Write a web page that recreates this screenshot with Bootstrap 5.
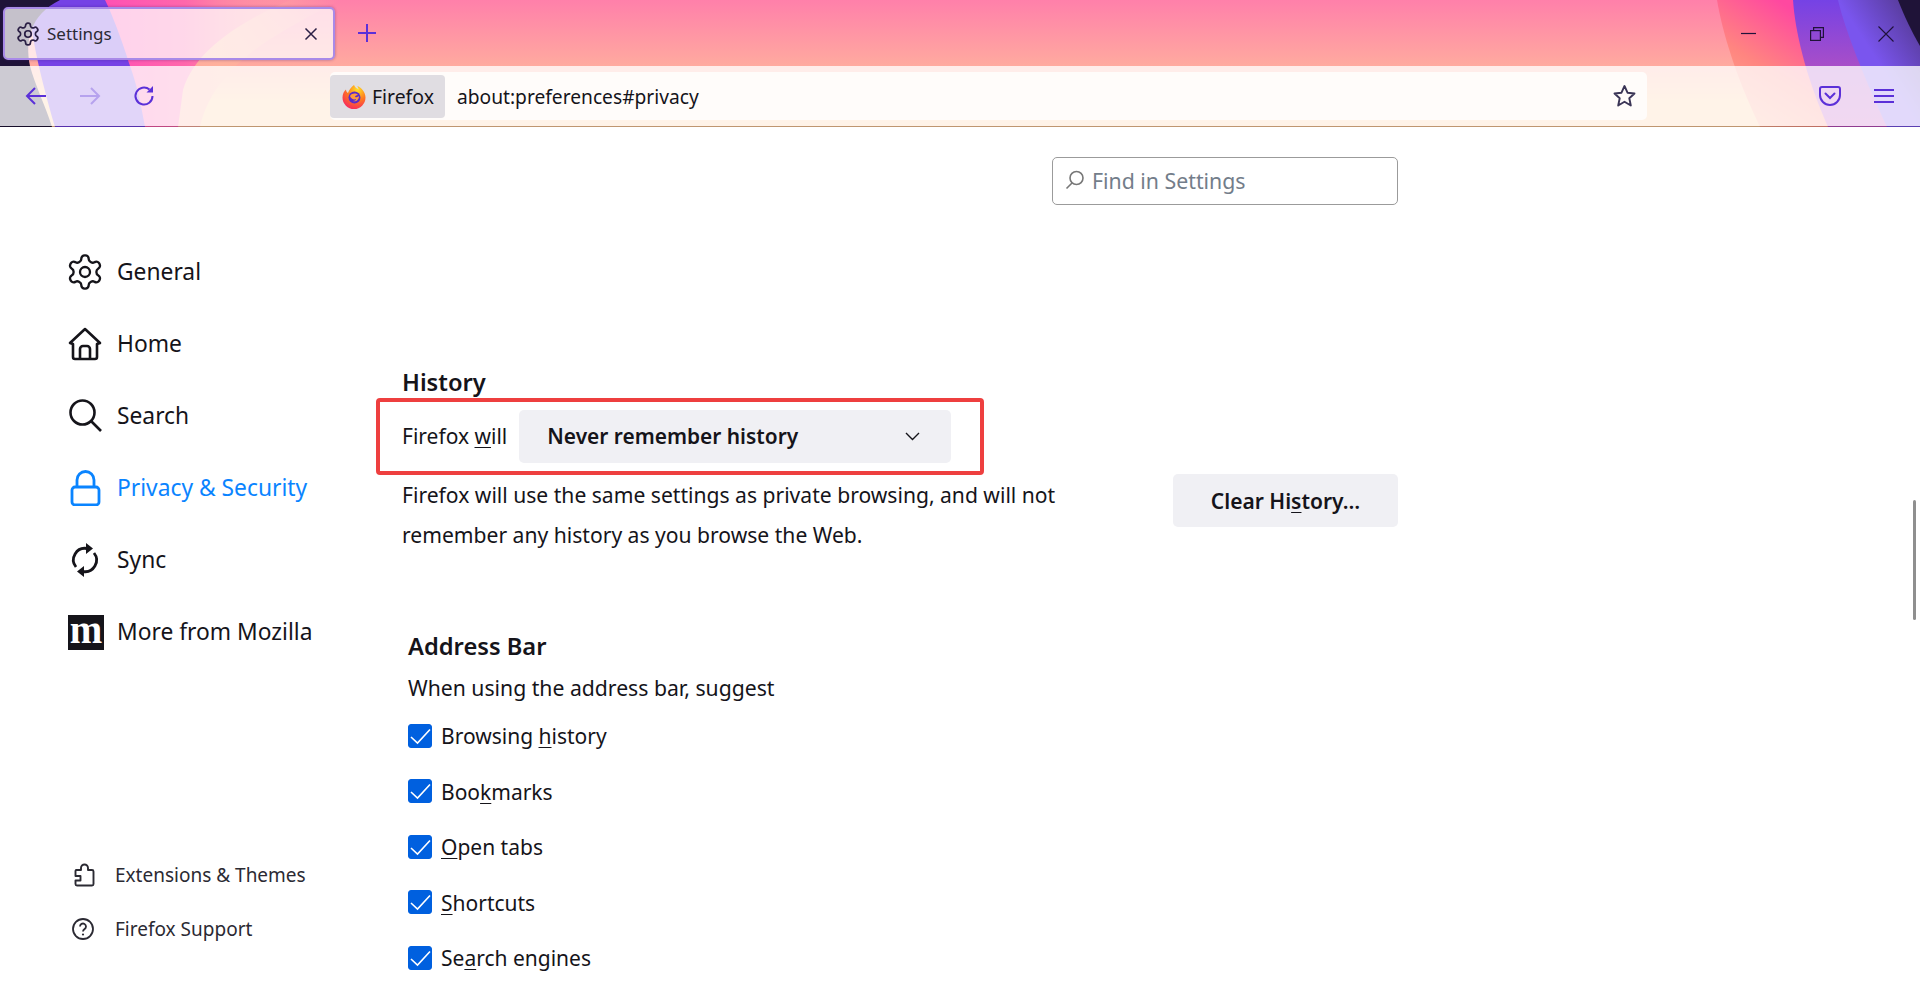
<!DOCTYPE html>
<html lang="en">
<head>
<meta charset="utf-8">
<title>Settings</title>
<link href="https://cdn.jsdelivr.net/npm/bootstrap@5.3.0/dist/css/bootstrap.min.css" rel="stylesheet">
<style>
html,body{height:100%;}
body{font-family:"Noto Sans","Open Sans",sans-serif;font-size:21px;color:#15141a;overflow:hidden;background:#fff;}
.ff-head{height:127px;flex:none;isolation:isolate;}
.ff-theme{position:absolute;left:0;top:0;width:100%;height:100%;z-index:-1;}
.ff-tabbar{height:66px;padding:7px 0 0 3px;}
.ff-tab{width:332px;height:53px;background:rgba(255,255,255,.74);border:2px solid #a98ae8;border-radius:5px;box-shadow:0 0 3px rgba(60,30,120,.45);padding:0 15px 0 10px;font-size:17px;color:#2b2a33;}
.ff-tabtitle{margin-left:6px;}
.ff-plus{margin-left:22px;}
.ff-winbtns{margin-left:auto;padding-right:26px;gap:54px;height:53px;}
.ff-toolbar{height:61px;background:rgba(255,255,255,.78);background-clip:padding-box;border-bottom:1px solid rgba(0,0,0,.25);padding:0 26px 0 25px;}
.ff-navicons{gap:32px;width:305px;}
.ff-urlbar{width:1317px;height:48px;background:#fffcfa;border-radius:5px;padding:3px 10px 3px 0;font-size:19.200px;}
.ff-identity{width:115px;height:43px;background:#e0dde2;border-radius:4px;padding-left:12px;gap:6px;}
.ff-identity span{padding-top:2px;font-size:19.4px;}
.ff-urltext{margin-left:12px;padding-top:2px;}
.ff-rightbtns{margin-left:auto;gap:33px;}
.ff-side{width:402px;flex:none;padding:109px 0 52px 68px;}
.ff-catrow{height:72px;gap:15px;color:#15141a;font-size:22.8px;}
.ff-catrow.is-on{color:#0a84ff;}
.ff-caticon{width:34px;flex:none;}
.ff-gearbig{margin:-3px;}
.ff-mlogo{width:36px;height:35px;background:#15141a;color:#fff;font:700 39px/29px "Liberation Serif",serif;text-align:center;}
.ff-footrow{height:54px;font-size:19px;color:#2b2a33;padding-left:3px;gap:18px;}
.ff-footrow svg{flex:none;width:26px;}
.ff-main{width:996px;flex:none;}
.ff-searchbox{width:346px;margin:30px 0 0 auto;}
.ff-searchbox .form-control{height:48px;border:1px solid #9b9b9b;border-radius:5px;padding:0 12px 2px 39px;font-size:21.3px;color:#15141a;}
.ff-searchbox .form-control::placeholder{color:#737d8a;opacity:1;}
.ff-searchicon{position:absolute;left:13px;top:13px;}
.ff-h{font-size:23.7px;font-weight:600;line-height:34px;height:34px;}
.ff-h1{margin-top:160px;margin-bottom:-1px;}
.ff-redbox{width:608px;height:77px;margin-left:-26px;border:4px solid #ee3f3f;border-radius:4px;padding-left:22px;gap:12px;}
.ff-select{width:432px;height:53px;flex:none;border:0;border-radius:5px;background-color:#f0f0f4;padding:0 0 0 28px;font-size:20.9px;font-weight:600;color:#15141a;background-image:none;cursor:default;}
.ff-chev{position:absolute;right:31px;top:50%;margin-top:-5px;pointer-events:none;}
.ff-desc{line-height:40px;width:690px;font-size:21.1px;}
.ff-clear{width:225px;height:53px;margin-top:-1px;background:#f0f0f4;border:0;border-radius:5px;font-size:21px;font-weight:600;color:#15141a;padding:2px 0 0;}
.ff-sub{margin-left:6px;}
.ff-h2{margin-top:74px;}
.ff-when{line-height:40px;margin-top:5px;font-size:21.2px;}
.ff-chk{height:55.5px;margin:0;padding:0;gap:9px;}
.ff-chk .form-check-input{width:24px;height:24px;margin:0;float:none;flex:none;border-radius:3px;background-color:#0060df;border-color:#0060df;background-size:24px;}
.ff-chk .form-check-input:checked{background-image:url("data:image/svg+xml,%3Csvg xmlns='http://www.w3.org/2000/svg' viewBox='0 0 24 24'%3E%3Cpath d='M3 13l6.500 6L22 5.500' fill='none' stroke='%23fff' stroke-width='1.600'/%3E%3C/svg%3E");}
.ff-chk label{margin:2px 0 0;}
.ff-scroll{position:absolute;right:4px;top:500px;width:3px;height:120px;background:#8f8f8f;}
u{text-underline-offset:3px;text-decoration-thickness:1px;}
</style>
</head>
<body class="d-flex flex-column">
<header class="ff-head position-relative">
  <svg class="ff-theme" viewBox="0 0 1920 127" preserveAspectRatio="none" aria-hidden="true">
    <defs>
      <linearGradient id="bg" x1="0" y1="0" x2="0" y2="1"><stop offset="0" stop-color="#ff80aa"/><stop offset=".52" stop-color="#ffaa9f"/><stop offset=".8" stop-color="#ffc896"/><stop offset="1" stop-color="#ffc896"/></linearGradient>
      <linearGradient id="hotR" x1="1" y1="0" x2="0" y2="1"><stop offset=".35" stop-color="#ff48a0"/><stop offset=".65" stop-color="#ff8580"/><stop offset="1" stop-color="#ffb890"/></linearGradient>
      <linearGradient id="pur" x1="0" y1="0" x2="0" y2="1"><stop offset="0" stop-color="#7542e5"/><stop offset=".52" stop-color="#a84ec8"/><stop offset="1" stop-color="#c050c0"/></linearGradient>
      <linearGradient id="pur2" x1="1" y1="0" x2="0" y2="1"><stop offset="0" stop-color="#4f3585"/><stop offset=".5" stop-color="#7a55ee"/><stop offset="1" stop-color="#7a55ee"/></linearGradient>
      <linearGradient id="pk" x1="0" y1="0" x2="1" y2="0"><stop offset="0" stop-color="#ff40b8" stop-opacity=".85"/><stop offset=".45" stop-color="#ff50b0" stop-opacity=".75"/><stop offset="1" stop-color="#ff70a8" stop-opacity=".1"/></linearGradient>
      <linearGradient id="pc" x1="0" y1="0" x2="1" y2="0"><stop offset="0" stop-color="#ffa4a0"/><stop offset=".5" stop-color="#ffb09c"/><stop offset="1" stop-color="#ffb09c" stop-opacity="0"/></linearGradient>
    </defs>
    <rect width="1920" height="127" fill="url(#bg)"/>
    <path d="M100 0H340C285 30 215 60 200 127H140Z" fill="url(#pc)"/>
    <path d="M100 0H290C240 22 195 50 183 90L178 127H140C135 85 125 40 100 0Z" fill="url(#pk)"/>
    <path d="M28 0H105C112 14 122 40 130 66C137 85 141 105 145 127H55C40 75 32 40 28 0Z" fill="#7542e5"/>
    <path d="M0 0H60C30 15 25 40 30 66C35 85 45 105 52 127H0Z" fill="#1f1338"/>
    <path d="M1717 0C1722 30 1735 75 1760 127H1920V0Z" fill="url(#hotR)"/>
    <path d="M1793 0C1795 30 1805 75 1828 127H1920V0Z" fill="url(#pur)"/>
    <path d="M1838 0C1845 30 1865 80 1887 127H1920V0Z" fill="url(#pur2)"/>
    <path d="M1898 0C1905 18 1912 32 1920 46V0Z" fill="#1f1338"/>
  </svg>
  <div class="ff-tabbar d-flex align-items-start">
    <div class="ff-tab d-flex align-items-center">
      <svg width="26" height="26" viewBox="0 0 24 24" fill="none" stroke="#2b1f45" stroke-width="1.600"><path d="M12.220 2h-.44a2 2 0 0 0-2 2v.18a2 2 0 0 1-1 1.730l-.43.25a2 2 0 0 1-2 0l-.15-.08a2 2 0 0 0-2.730.73l-.22.38a2 2 0 0 0 .73 2.730l.15.1a2 2 0 0 1 1 1.720v.51a2 2 0 0 1-1 1.740l-.15.09a2 2 0 0 0-.73 2.730l.22.38a2 2 0 0 0 2.730.73l.15-.08a2 2 0 0 1 2 0l.43.25a2 2 0 0 1 1 1.730V20a2 2 0 0 0 2 2h.44a2 2 0 0 0 2-2v-.18a2 2 0 0 1 1-1.730l.43-.25a2 2 0 0 1 2 0l.15.08a2 2 0 0 0 2.730-.73l.22-.39a2 2 0 0 0-.73-2.730l-.15-.08a2 2 0 0 1-1-1.740v-.5a2 2 0 0 1 1-1.740l.15-.09a2 2 0 0 0 .73-2.730l-.22-.38a2 2 0 0 0-2.730-.73l-.15.08a2 2 0 0 1-2 0l-.43-.25a2 2 0 0 1-1-1.730V4a2 2 0 0 0-2-2z"/><circle cx="12" cy="12" r="3"/></svg>
      <span class="ff-tabtitle">Settings</span>
      <svg class="ms-auto" width="14" height="14" viewBox="0 0 14 14" fill="none" stroke="#2b1f45" stroke-width="1.500"><path d="M1.500 1.500l11 11M12.500 1.500l-11 11"/></svg>
    </div>
    <svg class="ff-plus mt-3" width="20" height="20" viewBox="0 0 20 20" fill="none" stroke="#5b30d8" stroke-width="2"><path d="M10 1v18M1 10h18"/></svg>
    <div class="ff-winbtns d-flex align-items-center">
      <svg width="15" height="15" viewBox="0 0 15 15" fill="none" stroke="#20123a" stroke-width="1.200"><path d="M0 7.500h15"/></svg>
      <svg width="14" height="14" viewBox="0 0 14 14" fill="none" stroke="#20123a" stroke-width="1.200"><rect x=".6" y="3.600" width="9.800" height="9.800"/><path d="M3.600 3.600V.6h9.800v9.800h-3"/></svg>
      <svg width="16" height="16" viewBox="0 0 16 16" fill="none" stroke="#20123a" stroke-width="1.100"><path d="M.5.5l15 15M15.500.5l-15 15"/></svg>
    </div>
  </div>
  <div class="ff-toolbar d-flex align-items-center">
    <div class="ff-navicons d-flex align-items-center">
      <svg width="22" height="20" viewBox="0 0 22 20" fill="none" stroke="#5b30d8" stroke-width="2"><path d="M21 10H2M10 2l-8 8 8 8"/></svg>
      <svg width="22" height="20" viewBox="0 0 22 20" fill="none" stroke="#b6a2ee" stroke-width="2"><path d="M1 10h19M12 2l8 8-8 8"/></svg>
      <svg width="22" height="22" viewBox="0 0 22 22" fill="none" stroke="#5b30d8" stroke-width="2"><path d="M19.500 11a8.500 8.500 0 1 1-3-6.500"/><path d="M20 1v6.500h-6.500" fill="#5b30d8" stroke="none"/></svg>
    </div>
    <div class="ff-urlbar d-flex align-items-center">
      <div class="ff-identity d-flex align-items-center">
        <svg width="24" height="25" viewBox="0 0 24 25" aria-hidden="true">
          <defs><radialGradient id="fx" cx=".65" cy=".2" r=".95"><stop offset="0" stop-color="#ffe226"/><stop offset=".45" stop-color="#ff7a1f"/><stop offset="1" stop-color="#f5156c"/></radialGradient></defs>
          <path d="M12 1c1 3 3 3.500 5 4.500C16 4 15.500 3 15.500 2c4 2 8 6 8 11.500A11.500 11.500 0 0 1 .5 13.500C.5 10 2 7 4 5.500c0 2 1 3 2 3.500C7 6 9 3 12 1Z" fill="url(#fx)"/>
          <circle cx="12.500" cy="13.500" r="6" fill="#5b2bc8"/>
          <path d="M8 12c2-3 6-3 8-1-2 0-3 1-3 2 2 .5 3 0 4-1 0 4-3 6-6 5 2 0 3-1 3-2-2 1-5 0-6-3Z" fill="#ff9a3c"/>
        </svg>
        <span>Firefox</span>
      </div>
      <span class="ff-urltext">about:preferences#privacy</span>
      <svg class="ms-auto" width="25" height="24" viewBox="0 0 25 24" fill="none" stroke="#3b3556" stroke-width="1.900" stroke-linejoin="round"><path d="M12.500 2l3 6.700 7 .8-5.200 4.800 1.500 7.200-6.300-3.700-6.300 3.700 1.500-7.200L2.500 9.500l7-.8z"/></svg>
    </div>
    <div class="ff-rightbtns d-flex align-items-center">
      <svg width="22" height="20" viewBox="0 0 22 20" fill="none" stroke="#5b30d8" stroke-width="2"><path d="M3 1h16a2 2 0 0 1 2 2v6a10 10 0 0 1-20 0V3a2 2 0 0 1 2-2z"/><path d="M6.500 7.500l4.500 4.500 4.500-4.500" stroke-linecap="round"/></svg>
      <svg width="20" height="16" viewBox="0 0 20 16" fill="none" stroke="#5b30d8" stroke-width="2"><path d="M0 2h20M0 8h20M0 14h20"/></svg>
    </div>
  </div>
</header>

<div class="d-flex flex-grow-1 position-relative">
  <nav class="ff-side d-flex flex-column">
    <div class="ff-catrow d-flex align-items-center">
      <span class="ff-caticon"><svg class="d-block ff-gearbig" width="40" height="40" viewBox="0 0 24 24" fill="none" stroke="#15141a" stroke-width="1.400"><path d="M12.220 2h-.44a2 2 0 0 0-2 2v.18a2 2 0 0 1-1 1.730l-.43.25a2 2 0 0 1-2 0l-.15-.08a2 2 0 0 0-2.730.73l-.22.38a2 2 0 0 0 .73 2.730l.15.1a2 2 0 0 1 1 1.720v.51a2 2 0 0 1-1 1.740l-.15.09a2 2 0 0 0-.73 2.730l.22.38a2 2 0 0 0 2.730.73l.15-.08a2 2 0 0 1 2 0l.43.25a2 2 0 0 1 1 1.730V20a2 2 0 0 0 2 2h.44a2 2 0 0 0 2-2v-.18a2 2 0 0 1 1-1.730l.43-.25a2 2 0 0 1 2 0l.15.08a2 2 0 0 0 2.730-.73l.22-.39a2 2 0 0 0-.73-2.730l-.15-.08a2 2 0 0 1-1-1.740v-.5a2 2 0 0 1 1-1.740l.15-.09a2 2 0 0 0 .73-2.730l-.22-.38a2 2 0 0 0-2.730-.73l-.15.08a2 2 0 0 1-2 0l-.43-.25a2 2 0 0 1-1-1.730V4a2 2 0 0 0-2-2z"/><circle cx="12" cy="12" r="3"/></svg></span>
      <span>General</span>
    </div>
    <div class="ff-catrow d-flex align-items-center">
      <span class="ff-caticon"><svg class="d-block" width="34" height="34" viewBox="0 0 34 34" fill="none" stroke="#15141a" stroke-width="2.600" stroke-linejoin="round"><path d="M2 16L17 2l15 14-3 1v13a2 2 0 0 1-2 2H7a2 2 0 0 1-2-2V17z"/><path d="M12 32V22a3 3 0 0 1 3-3h4a3 3 0 0 1 3 3v10"/></svg></span>
      <span>Home</span>
    </div>
    <div class="ff-catrow d-flex align-items-center">
      <span class="ff-caticon"><svg class="d-block" width="34" height="34" viewBox="0 0 34 34" fill="none" stroke="#15141a" stroke-width="2.600"><circle cx="14.500" cy="13.500" r="12"/><path d="M23 22l10 10"/></svg></span>
      <span>Search</span>
    </div>
    <div class="ff-catrow is-on d-flex align-items-center">
      <span class="ff-caticon"><svg class="d-block" width="34" height="36" viewBox="0 0 34 36" fill="none" stroke="#0a84ff" stroke-width="2.800"><rect x="4" y="17" width="27" height="18" rx="3"/><path d="M9 17V10a8.500 8.500 0 0 1 17 0v7"/></svg></span>
      <span>Privacy &amp; Security</span>
    </div>
    <div class="ff-catrow d-flex align-items-center">
      <span class="ff-caticon"><svg class="d-block" width="34" height="36" viewBox="0 0 34 36" fill="none" stroke="#15141a" stroke-width="2.800"><path d="M8 25A11.500 11.500 0 0 1 19 6.500"/><path d="M26 11A11.500 11.500 0 0 1 15 29.500"/><path d="M18 1v11l7-5.500zM16 24v11l-7-5.500z" fill="#15141a" stroke="none"/></svg></span>
      <span>Sync</span>
    </div>
    <div class="ff-catrow d-flex align-items-center">
      <span class="ff-caticon"><span class="ff-mlogo d-block">m</span></span>
      <span>More from Mozilla</span>
    </div>
    <div class="mt-auto">
      <div class="ff-footrow d-flex align-items-center">
        <svg width="26" height="26" viewBox="0 0 26 26" fill="none" stroke="#2b2a33" stroke-width="1.900" stroke-linejoin="round"><path d="M5 8h5V6a3.500 3.500 0 0 1 7 0v2h4a1.500 1.500 0 0 1 1.500 1.500V22a1.500 1.500 0 0 1-1.500 1.500H6a1.500 1.500 0 0 1-1.500-1.500v-3.500h5v-4.500h-5V9z"/></svg>
        <span>Extensions &amp; Themes</span>
      </div>
      <div class="ff-footrow d-flex align-items-center">
        <svg width="26" height="26" viewBox="0 0 26 26" fill="none" stroke="#2b2a33" stroke-width="1.800"><circle cx="12" cy="13" r="10"/><path d="M9 10.500a3 3 0 1 1 4.500 2.600c-1 .6-1.500 1-1.500 2.400"/><circle cx="12" cy="18.500" r="1.100" fill="#2b2a33" stroke="none"/></svg>
        <span>Firefox Support</span>
      </div>
    </div>
  </nav>

  <main class="ff-main">
    <div class="ff-searchbox position-relative">
      <input class="form-control" type="text" placeholder="Find in Settings" aria-label="Find in Settings">
      <svg class="ff-searchicon" width="20" height="20" viewBox="0 0 20 20" fill="none" stroke="#777" stroke-width="1.600"><circle cx="11.500" cy="8" r="6.500"/><path d="M7 13l-5.500 5.500"/></svg>
    </div>

    <div class="ff-h ff-h1">History</div>
    <div class="ff-redbox d-flex align-items-center">
      <label for="hist"><span>Firefox <u>w</u>ill</span></label>
      <div class="position-relative">
        <select id="hist" class="form-select ff-select"><option>Never remember history</option></select>
        <svg class="ff-chev" width="15" height="9" viewBox="0 0 15 9" fill="none" stroke="#15141a" stroke-width="1.400"><path d="M1 1l6.500 6.500L14 1"/></svg>
      </div>
    </div>
    <div class="d-flex justify-content-between align-items-start">
      <div class="ff-desc">Firefox will use the same settings as private browsing, and will not remember any history as you browse the Web.</div>
      <button class="btn ff-clear" type="button">Clear Hi<u>s</u>tory…</button>
    </div>

    <div class="ff-sub">
      <div class="ff-h ff-h2">Address Bar</div>
      <div class="ff-when">When using the address bar, suggest</div>
      <div class="form-check ff-chk d-flex align-items-center"><input class="form-check-input" type="checkbox" id="c1" checked><label for="c1">Browsing <u>h</u>istory</label></div>
      <div class="form-check ff-chk d-flex align-items-center"><input class="form-check-input" type="checkbox" id="c2" checked><label for="c2">Boo<u>k</u>marks</label></div>
      <div class="form-check ff-chk d-flex align-items-center"><input class="form-check-input" type="checkbox" id="c3" checked><label for="c3"><u>O</u>pen tabs</label></div>
      <div class="form-check ff-chk d-flex align-items-center"><input class="form-check-input" type="checkbox" id="c4" checked><label for="c4"><u>S</u>hortcuts</label></div>
      <div class="form-check ff-chk d-flex align-items-center"><input class="form-check-input" type="checkbox" id="c5" checked><label for="c5">Se<u>a</u>rch engines</label></div>
    </div>
  </main>
</div>
<div class="ff-scroll rounded-1"></div>
</body>
</html>
